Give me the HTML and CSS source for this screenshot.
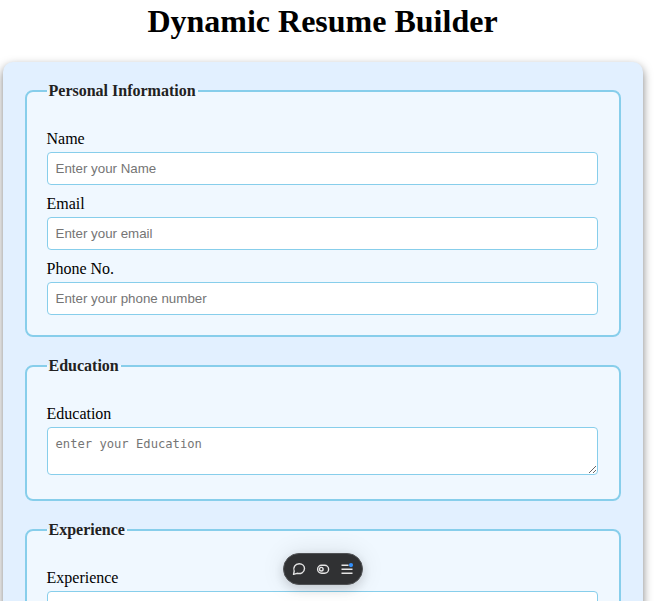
FILE: index.html
```html
<!DOCTYPE html>
<html lang="en">
<head>
<meta charset="utf-8">
<title>Dynamic Resume Builder</title>
<link rel="stylesheet" href="styles.css">
</head>
<body>
<main class="page">
<h1>Dynamic Resume Builder</h1>
<form class="resume-form">
  <fieldset>
    <legend>Personal Information</legend>
    <label for="name">Name</label>
    <input id="name" type="text" placeholder="Enter your Name">
    <label for="email">Email</label>
    <input id="email" type="email" placeholder="Enter your email">
    <label for="phone">Phone No.</label>
    <input id="phone" type="tel" placeholder="Enter your phone number">
  </fieldset>
  <fieldset>
    <legend>Education</legend>
    <label for="education">Education</label>
    <textarea id="education" rows="2" placeholder="enter your Education"></textarea>
  </fieldset>
  <fieldset>
    <legend>Experience</legend>
    <label for="experience">Experience</label>
    <textarea id="experience" rows="2"></textarea>
  </fieldset>
</form>
</main>
<div class="toolbar">
  <svg viewBox="0 0 16 16"><path d="M2.5 13.3 3.2 10.2C1.8 6.5 4 2.8 8.2 2.8C11.5 2.8 13.5 5 13.5 7.6C13.5 11.6 9.5 13.2 6 12.3Z"/></svg>
  <svg viewBox="0 0 16 16"><rect x="2.6" y="4.2" width="11" height="8" rx="4"/><circle cx="6.3" cy="8.2" r="1.8"/></svg>
  <svg viewBox="0 0 16 16"><path d="M2.5 4.2H9.5M2.5 8.2H13.5M2.5 12.2H13.5"/><circle class="dot" cx="12" cy="4.1" r="2.1"/></svg>
</div>
</body>
</html>
```
FILE: styles.css
```css
* {
  box-sizing: border-box;
}

html {
  height: 100%;
  overflow: hidden;
}

body {
  height: 100%;
  margin: 0;
  overflow: hidden;
  background: #fff;
  color: #000;
  font: 16px/18px "Liberation Serif", serif;
}

.page {
  height: 100%;
  padding: 3px 10px 0 0;
  overflow: hidden;
}

h1 {
  margin: 0 0 22px;
  font-size: 32px;
  line-height: 37px;
  text-align: center;
}

.resume-form {
  width: 640px;
  height: 640px;
  margin: 0 auto;
  padding: 20px 22px;
  border-radius: 10px;
  background: #e2f0ff;
  box-shadow: 0 4px 10px rgba(0, 0, 0, 0.5);
}

fieldset {
  min-width: 0;
  margin: 0 0 20px;
  padding: 20px;
  border: 2px solid #87ceeb;
  border-radius: 8px;
  background: #f0f8ff;
}

legend {
  padding: 0 2px;
  color: #222;
  font-weight: bold;
}

label {
  display: block;
  margin: 10px 0 4px;
}

input,
textarea {
  display: block;
  width: 551px;
  padding: 8px;
  border: 1px solid #87ceeb;
  border-radius: 4px;
  outline: none;
  background: #fff;
}

input {
  height: 33px;
  font: 13.333px "Liberation Sans", sans-serif;
}

textarea {
  height: 48px;
  margin-bottom: 4px;
  padding-top: 9px;
  padding-bottom: 7px;
  overflow: auto;
  font: 12.17px/15px "DejaVu Sans Mono", monospace;
}

::placeholder {
  color: #757575;
}

.toolbar {
  position: fixed;
  top: 553px;
  left: 283px;
  display: flex;
  align-items: center;
  justify-content: center;
  gap: 8px;
  width: 80px;
  height: 32px;
  border: 1px solid #505255;
  border-radius: 16px;
  background: #303133;
  box-shadow: 0 4px 12px rgba(0, 0, 0, 0.14), 0 0 24px rgba(0, 0, 0, 0.1);
}

.toolbar svg {
  width: 16px;
  height: 16px;
  fill: none;
  stroke: #e4e4e4;
  stroke-width: 1.4;
  stroke-linejoin: round;
}

.toolbar .dot {
  fill: #3291ff;
  stroke: none;
}
```
